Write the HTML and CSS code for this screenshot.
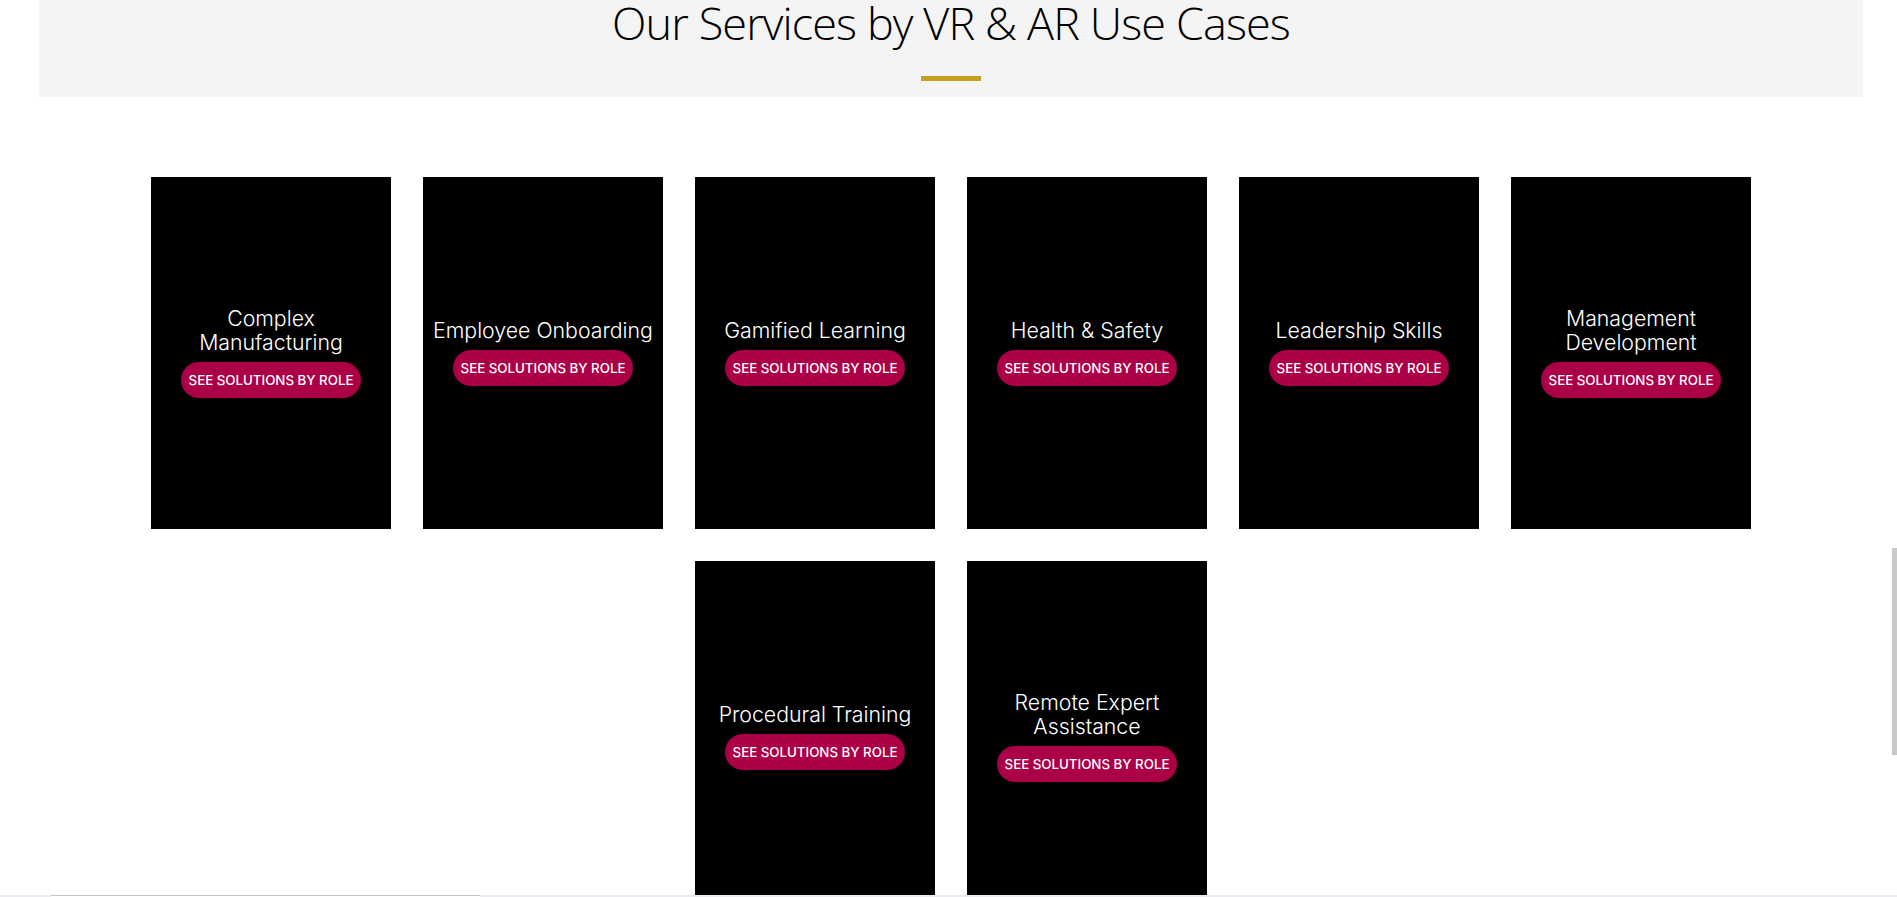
FILE: index.html
```html
<!DOCTYPE html>
<html lang="en">
<head>
<meta charset="utf-8">
<title>Our Services by VR &amp; AR Use Cases</title>
<link rel="stylesheet" href="styles.css">
</head>
<body>
<section class="intro">
  <h2 class="intro-title">Our Services by VR &amp; AR Use Cases</h2>
  <div class="intro-rule"></div>
</section>

<section class="cases">
  <div class="case">
    <h3 class="case-title">Complex Manufacturing</h3>
    <a class="case-btn" href="#">SEE SOLUTIONS BY ROLE</a>
  </div>
  <div class="case">
    <h3 class="case-title">Employee Onboarding</h3>
    <a class="case-btn" href="#">SEE SOLUTIONS BY ROLE</a>
  </div>
  <div class="case">
    <h3 class="case-title">Gamified Learning</h3>
    <a class="case-btn" href="#">SEE SOLUTIONS BY ROLE</a>
  </div>
  <div class="case">
    <h3 class="case-title">Health &amp; Safety</h3>
    <a class="case-btn" href="#">SEE SOLUTIONS BY ROLE</a>
  </div>
  <div class="case">
    <h3 class="case-title">Leadership Skills</h3>
    <a class="case-btn" href="#">SEE SOLUTIONS BY ROLE</a>
  </div>
  <div class="case">
    <h3 class="case-title">Management Development</h3>
    <a class="case-btn" href="#">SEE SOLUTIONS BY ROLE</a>
  </div>
  <div class="case">
    <h3 class="case-title">Procedural Training</h3>
    <a class="case-btn" href="#">SEE SOLUTIONS BY ROLE</a>
  </div>
  <div class="case">
    <h3 class="case-title">Remote Expert Assistance</h3>
    <a class="case-btn" href="#">SEE SOLUTIONS BY ROLE</a>
  </div>
</section>

<div class="vscroll"></div>
<div class="hscroll"><div class="hscroll-thumb"></div></div>
</body>
</html>
```
FILE: styles.css
```css
html, body {
  margin: 0;
  padding: 0;
  background: #ffffff;
}

body {
  font-family: "Inter", "Liberation Sans", sans-serif;
  color: #000;
}

.intro {
  margin: 0 34px 0 39px;
  height: 97px;
  box-sizing: border-box;
  background: #f4f4f4;
  text-align: center;
  overflow: hidden;
}

.intro-title {
  margin: 0;
  font-family: "Open Sans", "Lato", sans-serif;
  font-weight: 300;
  font-size: 45px;
  line-height: 45px;
  letter-spacing: -0.9px;
  color: #000;
}

.intro-rule {
  width: 60px;
  height: 5px;
  margin: 31px auto 0;
  background: #c3a020;
}

.cases {
  width: 1600px;
  margin: 80px 0 0 151px;
  display: flex;
  flex-wrap: wrap;
  justify-content: center;
  gap: 32px;
}

.case {
  width: 240px;
  height: 352px;
  box-sizing: border-box;
  padding: 0 6px 2px;
  background: #000;
  display: flex;
  flex-direction: column;
  align-items: center;
  justify-content: center;
  text-align: center;
}

.case-title {
  margin: 0 0 8px;
  font-family: "Inter", sans-serif;
  font-weight: 300;
  font-size: 21.3px;
  line-height: 24px;
  color: #ffffff;
}

.case-btn {
  display: inline-flex;
  align-items: center;
  justify-content: center;
  height: 36px;
  padding: 0 8px;
  border-radius: 18px;
  background: #ab0047;
  color: #ffffff;
  font-family: "Inter", sans-serif;
  font-weight: 500;
  font-size: 13.3px;
  text-decoration: none;
  white-space: nowrap;
}

.vscroll {
  position: fixed;
  right: 0;
  top: 548px;
  width: 5px;
  height: 207px;
  background: #c9c9c9;
}

.hscroll {
  position: fixed;
  left: 0;
  right: 0;
  bottom: 0;
  height: 2px;
  background: #ebebef;
}

.hscroll-thumb {
  margin-left: 51px;
  width: 429px;
  height: 2px;
  box-sizing: border-box;
  border-top: 1px solid #c4c4c4;
  background: #ffffff;
}
```
